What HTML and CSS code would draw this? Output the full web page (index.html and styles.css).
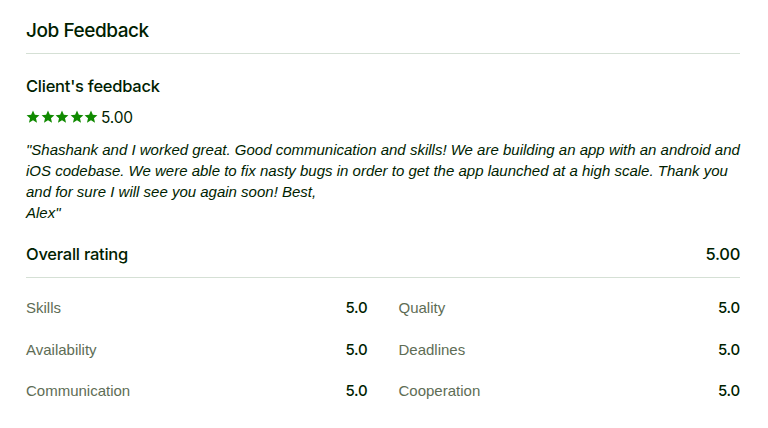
FILE: index.html
```html
<!DOCTYPE html>
<html>
<head>
<meta charset="utf-8">
<link rel="stylesheet" href="styles.css">
</head>
<body>
<div class="page">
  <h1 class="title">Job Feedback</h1>
  <div class="divider"></div>
  <section class="client">
    <h2 class="subtitle">Client's feedback</h2>
    <div class="rating">
      <div class="stars">
        <svg viewBox="0 0 24 24" class="star"><path d="M12 1l3.2 7.1 7.8.7-5.9 5.2 1.8 7.7L12 17.7 5.1 21.7l1.8-7.7L1 8.8l7.8-.7z"/></svg>
        <svg viewBox="0 0 24 24" class="star"><path d="M12 1l3.2 7.1 7.8.7-5.9 5.2 1.8 7.7L12 17.7 5.1 21.7l1.8-7.7L1 8.8l7.8-.7z"/></svg>
        <svg viewBox="0 0 24 24" class="star"><path d="M12 1l3.2 7.1 7.8.7-5.9 5.2 1.8 7.7L12 17.7 5.1 21.7l1.8-7.7L1 8.8l7.8-.7z"/></svg>
        <svg viewBox="0 0 24 24" class="star"><path d="M12 1l3.2 7.1 7.8.7-5.9 5.2 1.8 7.7L12 17.7 5.1 21.7l1.8-7.7L1 8.8l7.8-.7z"/></svg>
        <svg viewBox="0 0 24 24" class="star"><path d="M12 1l3.2 7.1 7.8.7-5.9 5.2 1.8 7.7L12 17.7 5.1 21.7l1.8-7.7L1 8.8l7.8-.7z"/></svg>
      </div>
      <span class="score">5.00</span>
    </div>
    <p class="quote">"Shashank and I worked great. Good communication and skills! We are building an app with an android and iOS codebase. We were able to fix nasty bugs in order to get the app launched at a high scale. Thank you and for sure I will see you again soon! Best,<br>Alex"</p>
  </section>
  <div class="overall">
    <h2 class="subtitle">Overall rating</h2>
    <span class="overall-score">5.00</span>
  </div>
  <div class="divider"></div>
  <div class="grid">
    <div class="row"><span class="label">Skills</span><span class="value">5.0</span></div>
    <div class="row"><span class="label">Quality</span><span class="value">5.0</span></div>
    <div class="row"><span class="label">Availability</span><span class="value">5.0</span></div>
    <div class="row"><span class="label">Deadlines</span><span class="value">5.0</span></div>
    <div class="row"><span class="label">Communication</span><span class="value">5.0</span></div>
    <div class="row"><span class="label">Cooperation</span><span class="value">5.0</span></div>
  </div>
</div>
</body>
</html>
```
FILE: styles.css
```css
* { box-sizing: border-box; }
body {
  margin: 0;
  background: #fff;
  font-family: "Liberation Sans", Arial, sans-serif;
  color: #001e00;
}
.page {
  padding: 19px 28px 0 26px;
  width: 768px;
}
.title {
  margin: 0;
  font-family: Inter, "Liberation Sans", sans-serif;
  font-size: 19px;
  font-weight: 500;
  line-height: 24px;
  letter-spacing: -0.45px;
}
.divider {
  height: 1px;
  background: #d5e0d5;
  margin-top: 10px;
}
.client { padding-top: 21px; }
.subtitle {
  margin: 0;
  font-family: Inter, "Liberation Sans", sans-serif;
  font-size: 16.5px;
  font-weight: 500;
  line-height: 22px;
  letter-spacing: -0.25px;
}
.rating {
  display: flex;
  align-items: center;
  gap: 3px;
  margin-top: 10px;
  height: 20px;
}
.stars { display: flex; gap: 0.5px; }
.star { width: 14px; height: 14px; fill: #108a00; }
.score {
  font-family: Inter, "Liberation Sans", sans-serif;
  font-size: 15.5px;
  letter-spacing: -0.2px;
}
.quote {
  margin: 12px 0 0;
  font-size: 15px;
  font-style: italic;
  line-height: 21px;
}
.overall {
  display: flex;
  justify-content: space-between;
  align-items: center;
  margin-top: 20px;
}
.overall-score {
  font-family: Inter, "Liberation Sans", sans-serif;
  font-size: 16.5px;
  font-weight: 500;
  letter-spacing: -0.3px;
}
.overall + .divider { margin-top: 12px; }
.grid {
  display: grid;
  grid-template-columns: 1fr 1fr;
  column-gap: 31px;
  row-gap: 19.5px;
  padding-top: 19px;
}
.row {
  display: flex;
  justify-content: space-between;
  align-items: center;
  font-size: 15px;
  line-height: 22px;
}
.label { color: #5e6d55; }
.value {
  font-family: Inter, "Liberation Sans", sans-serif;
  font-weight: 500;
  letter-spacing: -0.2px;
}
```
